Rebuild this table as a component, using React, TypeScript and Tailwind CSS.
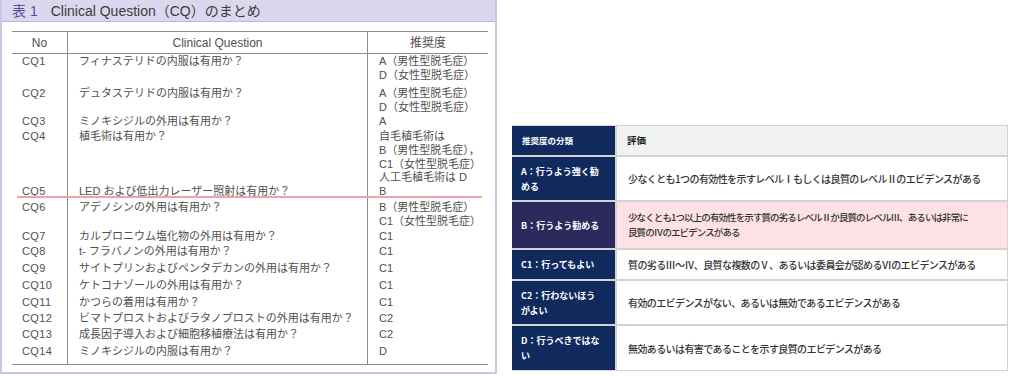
import React from 'react';

type CqRow = { no: string; q: string; g: string[]; h: string };

const cqRows: CqRow[] = [
    { no: 'CQ1', q: 'フィナステリドの内服は有用か？', g: ['A（男性型脱毛症）', 'D（女性型脱毛症）'], h: 'h-[32px]' },
    { no: 'CQ2', q: 'デュタステリドの内服は有用か？', g: ['A（男性型脱毛症）', 'D（女性型脱毛症）'], h: 'h-[28px]' },
    { no: 'CQ3', q: 'ミノキシジルの外用は有用か？', g: ['A'], h: 'h-[15px]' },
    { no: 'CQ4', q: '植毛術は有用か？', g: ['自毛植毛術は', 'B（男性型脱毛症），', 'C1（女性型脱毛症）', '人工毛植毛術は D'], h: 'h-[55px]' },
    { no: 'CQ5', q: 'LED および低出力レーザー照射は有用か？', g: ['B'], h: 'h-[16px]' },
    { no: 'CQ6', q: 'アデノシンの外用は有用か？', g: ['B（男性型脱毛症）', 'C1（女性型脱毛症）'], h: 'h-[29px]' },
    { no: 'CQ7', q: 'カルプロニウム塩化物の外用は有用か？', g: ['C1'], h: 'h-[15px]' },
    { no: 'CQ8', q: 't- フラバノンの外用は有用か？', g: ['C1'], h: 'h-[17px]' },
    { no: 'CQ9', q: 'サイトプリンおよびペンタデカンの外用は有用か？', g: ['C1'], h: 'h-[17px]' },
    { no: 'CQ10', q: 'ケトコナゾールの外用は有用か？', g: ['C1'], h: 'h-[17px]' },
    { no: 'CQ11', q: 'かつらの着用は有用か？', g: ['C1'], h: 'h-[16px]' },
    { no: 'CQ12', q: 'ビマトプロストおよびラタノプロストの外用は有用か？', g: ['C2'], h: 'h-[16px]' },
    { no: 'CQ13', q: '成長因子導入および細胞移植療法は有用か？', g: ['C2'], h: 'h-[17px]' },
    { no: 'CQ14', q: 'ミノキシジルの内服は有用か？', g: ['D'], h: 'h-[20px]' },
];

type GradeRow = { label: string[]; text: string[]; h: string; pink?: boolean };

const gradeRows: GradeRow[] = [
    { label: ['A：行うよう強く勧', 'める'], text: ['少なくとも1つの有効性を示すレベルⅠもしくは良質のレベルⅡのエビデンスがある'], h: 'h-[43px]' },
    {
        label: ['B：行うよう勧める'],
        text: ['少なくとも1つ以上の有効性を示す質の劣るレベルⅡか良質のレベルⅢ、あるいは非常に', '良質のⅣのエビデンスがある'],
        h: 'h-[46px]',
        pink: true,
    },
    { label: ['C1：行ってもよい'], text: ['質の劣るⅢ～Ⅳ、良質な複数のⅤ、あるいは委員会が認めるⅥのエビデンスがある'], h: 'h-[29px]' },
    { label: ['C2：行わないほう', 'がよい'], text: ['有効のエビデンスがない、あるいは無効であるエビデンスがある'], h: 'h-[43px]' },
    { label: ['D：行うべきではな', 'い'], text: ['無効あるいは有害であることを示す良質のエビデンスがある'], h: 'h-[44px]' },
];

const CqTable = () => (
    <div className="relative w-[497px] h-[374px] border-x-2 border-b-2 border-[#c9c6e4] bg-white flex flex-col font-['Liberation_Sans','Noto_Sans_CJK_JP',sans-serif]">
        {/* title band */}
        <div className="h-[22px] bg-[#dad8ee] border-b border-[#bcb8dc] flex items-center pl-[10px] text-[14px] leading-none">
            <span className="text-[#5a4c9c]">表 1</span>
            <span className="ml-[13px] text-[#3a3a3a]">Clinical Question（CQ）のまとめ</span>
        </div>

        {/* table */}
        <div className="ml-[10px] mt-[9px] w-[476px] border-y border-[#8c8c8c] text-[#505050]">
            <div className="flex h-[22px] border-b border-[#8c8c8c] text-[12px] items-stretch">
                <div className="w-[56px] border-r border-[#8c8c8c] flex items-center justify-center">No</div>
                <div className="w-[300px] border-r border-[#8c8c8c] flex items-center justify-center">Clinical Question</div>
                <div className="flex-1 flex items-center justify-center">推奨度</div>
            </div>
            {cqRows.map((r) => (
                <div key={r.no} className={`flex ${r.h} text-[11px] leading-[13.8px]`}>
                    <div className="w-[56px] border-r border-[#8c8c8c] pl-[10px] pt-[1px] tracking-[0.4px]">{r.no}</div>
                    <div className="w-[300px] border-r border-[#8c8c8c] pl-[11px] pt-[1px] whitespace-nowrap">{r.q}</div>
                    <div className="flex-1 pl-[11px] pt-[1px] whitespace-nowrap">
                        {r.g.map((line) => (
                            <div key={line}>{line}</div>
                        ))}
                    </div>
                </div>
            ))}
        </div>

        {/* highlight under CQ5 */}
        <div className="absolute left-[15px] top-[196px] w-[465px] h-[2px] bg-[#f3a2aa]" />
    </div>
);

const GradeTable = () => (
    <div className="ml-[15px] mt-[125px] w-[496px] self-start bg-[#d3d3d3] pt-[1px] pr-[1px] pb-[1px] flex flex-col gap-[2px] font-['Noto_Sans_CJK_JP',sans-serif]">
        <div className="flex h-[29px] gap-[2px]">
            <div className="w-[103px] bg-[#102a5e] text-white font-bold text-[8.5px] flex items-center pl-[10px]">推奨度の分類</div>
            <div className="flex-1 bg-[#f1f2f2] text-[#222] font-bold text-[9.5px] flex items-center pl-[10px]">評価</div>
        </div>
        {gradeRows.map((r) => (
            <div key={r.label[0]} className={`flex ${r.h} gap-[2px]`}>
                <div
                    className={`w-[103px] ${r.pink ? 'bg-[#2c2a5d]' : 'bg-[#102a5e]'} text-white font-bold text-[9px] leading-[15px] flex flex-col justify-center pl-[9px] whitespace-nowrap`}
                >
                    {r.label.map((l) => (
                        <div key={l}>{l}</div>
                    ))}
                </div>
                <div
                    className={`flex-1 ${r.pink ? 'bg-[#fde1e4] text-[9.5px] tracking-[-0.9px]' : 'bg-white text-[10px] tracking-[-0.6px]'} text-[#333] font-medium leading-[15px] flex flex-col justify-center pl-[11px] whitespace-nowrap`}
                >
                    {r.text.map((t) => (
                        <div key={t}>{t}</div>
                    ))}
                </div>
            </div>
        ))}
    </div>
);

export default function App() {
    return (
        <div className="w-[1010px] h-[376px] bg-white flex">
            <CqTable />
            <GradeTable />
        </div>
    );
}
